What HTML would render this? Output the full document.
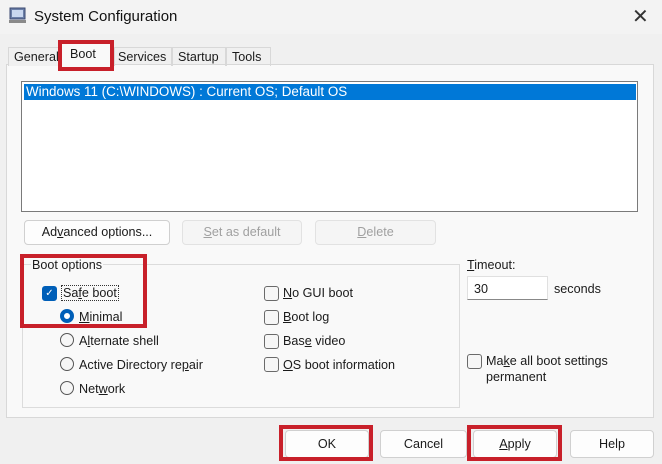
<!DOCTYPE html><html><head><style>
body{margin:0;width:662px;height:464px;background:#f0f0f0;font-family:"Liberation Sans",sans-serif;font-size:12.6px;color:#1a1a1a;position:relative;overflow:hidden}
.a{position:absolute}
.btn{position:absolute;background:#fdfdfd;border:1px solid #d0d0d0;border-radius:4px;text-align:center;box-sizing:border-box;line-height:22px}
.dis{color:#a0a0a0;background:#f5f5f5;border-color:#e2e2e2}
.red{position:absolute;border:4px solid #c8202a;box-sizing:border-box}
.cb{position:absolute;width:13px;height:13px;border:1px solid #6a6a6a;border-radius:3px;background:#f6f6f6}
.rb{position:absolute;width:14px;height:14px;border:1px solid #555;border-radius:50%;background:#f6f6f6;box-sizing:border-box}
u{text-decoration:underline}
</style></head><body>
<div class="a" style="left:0;top:0;width:662px;height:34px;background:#f3f3f3"></div>
<svg class="a" style="left:8px;top:7px" width="20" height="18"><rect x="2" y="1" width="15" height="11" fill="#6b7fa8" stroke="#3b4a70"/><rect x="4" y="3" width="11" height="7" fill="#c9d7ef"/><rect x="1" y="13" width="17" height="3" fill="#8a8a8a"/></svg>
<div class="a" style="left:34px;top:8px;font-size:15px;color:#111">System Configuration</div>
<div class="a" style="left:632px;top:4px;font-size:20px;color:#333">✕</div>
<div class="a" style="left:6px;top:64px;width:648px;height:354px;background:#f9f9f9;border:1px solid #d8d8d8;box-sizing:border-box"></div>
<div class="a" style="left:8px;top:47px;width:52px;height:18px;background:#f0f0f0;border:1px solid #d8d8d8;border-bottom:none"></div>
<div class="a" style="left:14px;top:50px">General</div>
<div class="a" style="left:60px;top:43px;width:52px;height:22px;background:#f9f9f9"></div>
<div class="a" style="left:70px;top:47px">Boot</div>
<div class="a" style="left:114px;top:47px;width:56px;height:18px;border:1px solid #d8d8d8;border-bottom:none"></div>
<div class="a" style="left:118px;top:50px">Services</div>
<div class="a" style="left:172px;top:47px;width:52px;height:18px;border:1px solid #d8d8d8;border-bottom:none"></div>
<div class="a" style="left:178px;top:50px">Startup</div>
<div class="a" style="left:226px;top:47px;width:43px;height:18px;border:1px solid #d8d8d8;border-bottom:none"></div>
<div class="a" style="left:232px;top:50px">Tools</div>
<div class="red" style="left:58px;top:40px;width:56px;height:31px"></div>
<div class="a" style="left:21px;top:81px;width:617px;height:131px;background:#fff;border:1px solid #7a7a7a;box-sizing:border-box"></div>
<div class="a" style="left:24px;top:84px;width:612px;height:16px;background:#0078d7;color:#fff;line-height:16px;padding-left:2px;box-sizing:border-box;font-size:13.4px">Windows 11 (C:\WINDOWS) : Current OS; Default OS</div>
<div class="btn" style="left:24px;top:220px;width:146px;height:25px">Ad<u>v</u>anced options...</div>
<div class="btn dis" style="left:182px;top:220px;width:120px;height:25px"><u>S</u>et as default</div>
<div class="btn dis" style="left:315px;top:220px;width:121px;height:25px"><u>D</u>elete</div>
<div class="a" style="left:22px;top:264px;width:438px;height:144px;border:1px solid #dcdcdc;box-sizing:border-box"></div>
<div class="a" style="left:31px;top:258px;background:#f9f9f9;padding:0 1px">Boot options</div>
<div class="cb" style="left:42px;top:286px;background:#005fb8;border-color:#005fb8;color:#fff;font-size:10px;line-height:13px;text-align:center">✓</div>
<div class="a" style="left:61px;top:285px;border:1px dotted #333;padding:0 1px"><span>Sa<u>f</u>e boot</span></div>
<div class="rb" style="left:60px;top:309px;border:4px solid #005fb8;background:#fff"></div>
<div class="a" style="left:79px;top:310px"><u>M</u>inimal</div>
<div class="rb" style="left:60px;top:333px"></div><div class="a" style="left:79px;top:334px">A<u>l</u>ternate shell</div>
<div class="rb" style="left:60px;top:357px"></div><div class="a" style="left:79px;top:358px">Active Directory re<u>p</u>air</div>
<div class="rb" style="left:60px;top:381px"></div><div class="a" style="left:79px;top:382px">Net<u>w</u>ork</div>
<div class="red" style="left:20px;top:254px;width:127px;height:74px"></div>
<div class="cb" style="left:264px;top:286px"></div><div class="a" style="left:283px;top:286px"><u>N</u>o GUI boot</div>
<div class="cb" style="left:264px;top:310px"></div><div class="a" style="left:283px;top:310px"><u>B</u>oot log</div>
<div class="cb" style="left:264px;top:334px"></div><div class="a" style="left:283px;top:334px">Bas<u>e</u> video</div>
<div class="cb" style="left:264px;top:357px"></div><div class="a" style="left:283px;top:358px"><u>O</u>S boot information</div>
<div class="a" style="left:467px;top:258px"><u>T</u>imeout:</div>
<div class="a" style="left:467px;top:276px;width:81px;height:24px;background:#fff;border:1px solid #e0e0e0;border-bottom:1px solid #888;box-sizing:border-box;padding:5px 6px">30</div>
<div class="a" style="left:554px;top:282px">seconds</div>
<div class="cb" style="left:467px;top:354px"></div>
<div class="a" style="left:486px;top:353px;line-height:16px">Ma<u>k</u>e all boot settings<br>permanent</div>
<div class="btn" style="left:285px;top:430px;width:84px;height:28px;line-height:26px">OK</div>
<div class="btn" style="left:380px;top:430px;width:87px;height:28px;line-height:26px">Cancel</div>
<div class="btn" style="left:473px;top:430px;width:84px;height:28px;line-height:26px"><u>A</u>pply</div>
<div class="btn" style="left:570px;top:430px;width:84px;height:28px;line-height:26px">Help</div>
<div class="red" style="left:279px;top:425px;width:94px;height:36px"></div>
<div class="red" style="left:467px;top:425px;width:95px;height:36px"></div>
</body></html>
